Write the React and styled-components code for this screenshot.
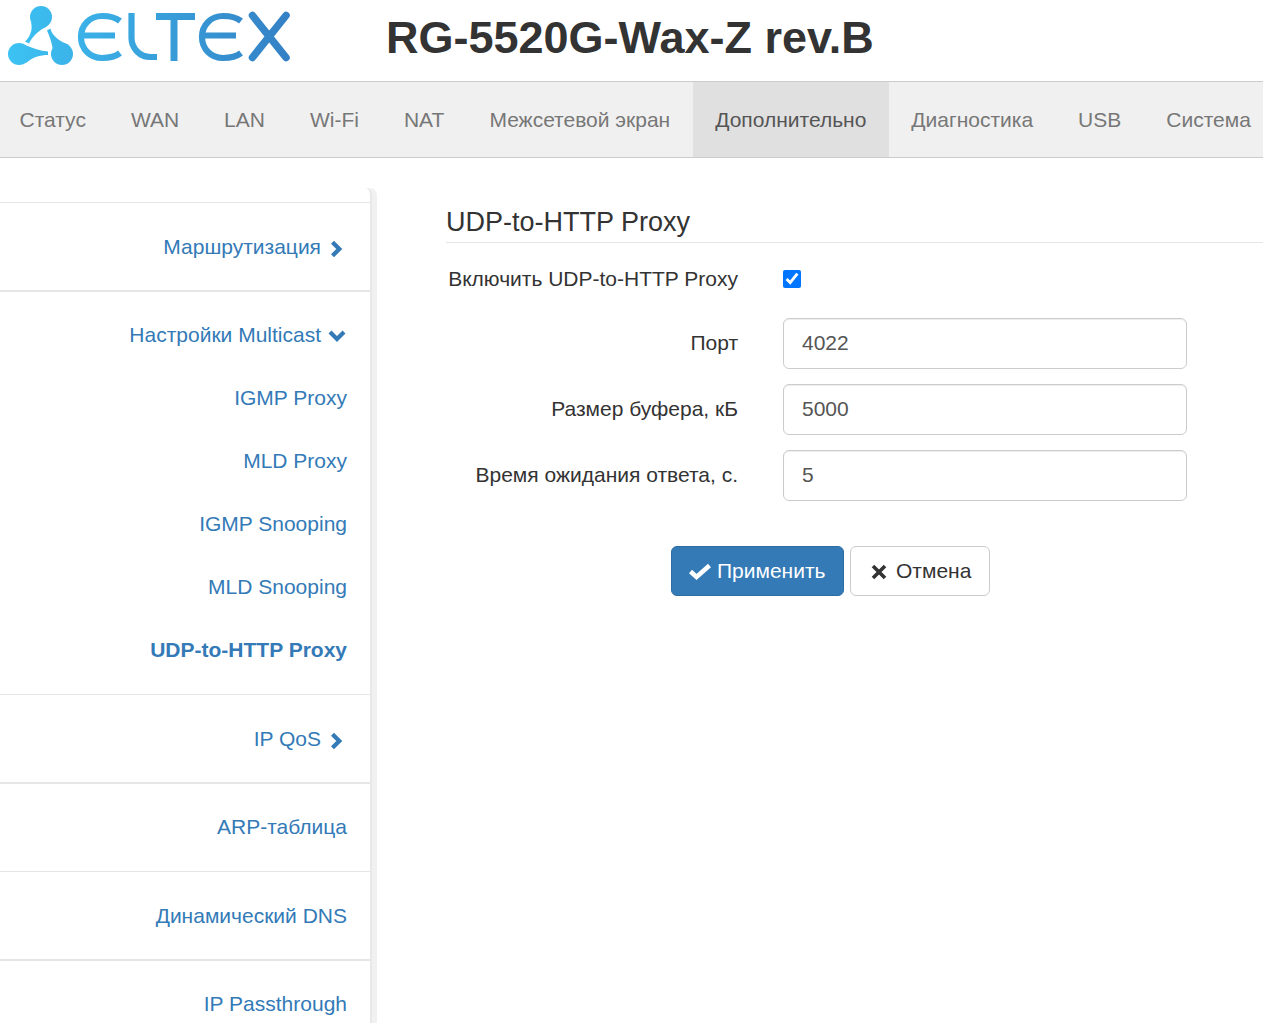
import React from "react";
import styled, { createGlobalStyle } from "styled-components";

const GlobalStyle = createGlobalStyle`
  html, body {
    margin: 0;
    padding: 0;
    height: 100%;
    overflow: hidden;
    background: #fff;
  }
  body {
    font-family: "Liberation Sans", Arial, sans-serif;
    font-size: 21px;
    line-height: 30px;
    color: #333;
  }
  * { box-sizing: border-box; }
`;

const NAV_ITEMS = ["Статус", "WAN", "LAN", "Wi-Fi", "NAT", "Межсетевой экран", "Дополнительно", "Диагностика", "USB", "Система"];

const FIELDS = [
  { label: "Порт", value: "4022" },
  { label: "Размер буфера, кБ", value: "5000" },
  { label: "Время ожидания ответа, с.", value: "5" },
];

const SUB_ITEMS = ["IGMP Proxy", "MLD Proxy", "IGMP Snooping", "MLD Snooping", "UDP-to-HTTP Proxy"];

function Logo() {
  return (
    <svg width="296" height="72" viewBox="0 0 296 72" fill="none">
      <defs>
        <linearGradient id="logoGrad" gradientUnits="userSpaceOnUse" x1="8" y1="0" x2="292" y2="0">
          <stop offset="0" stopColor="#3cc2f3" />
          <stop offset="1" stopColor="#3480c4" />
        </linearGradient>
      </defs>
      {/* three joined drops */}
      <g fill="url(#logoGrad)">
        <circle cx="41" cy="17" r="11" />
        <circle cx="19" cy="54" r="11" />
        <circle cx="62" cy="54" r="11" />
        <path d="M31 22 C33 30 30 37 25 41.500 L29 43.500 C32 37 38 31 46 27 Z" />
        <path d="M25 45 C33 48 40 51 48 51.500 V55 C40 55 33 57 26 63 Z" />
        <path d="M47 30.500 L50.500 28.500 C51 34 58 41 69 45 L55 62 C53 50 52 41 47 30.500 Z" />
      </g>
      <g stroke="url(#logoGrad)" strokeWidth="6.200" fill="none">
        <path d="M120 21 C115 17 108 16 102 16 C90 16 81 25 81 37 C81 49 90 58 102 58 C108 58 115 57 120 53" />
        <path d="M81 35.500 H115" />
        <path d="M131.500 13 V38 A 19 19 0 0 0 150.500 57 H157" />
        <path d="M156 16.500 H195" strokeWidth="7" />
        <path d="M174 16 V61" strokeWidth="7" />
        <path d="M241 21 C236 17 229 16 223 16 C211 16 202 25 202 37 C202 49 211 58 223 58 C229 58 236 57 241 53" />
        <path d="M202 35.500 H236" />
        <path d="M252.500 15.500 L286 57.500 M286 15.500 L252.500 57.500" strokeWidth="7.500" strokeLinecap="round" />
      </g>
    </svg>
  );
}

function ChevronRight() {
  return (
    <ChevronIcon viewBox="0 0 14 18">
      <path d="M3.500 2.200 L10.300 9 L3.500 15.800" fill="none" stroke="#337ab7" strokeWidth="4.200" />
    </ChevronIcon>
  );
}

function ChevronDown() {
  return (
    <ChevronDownIcon viewBox="0 0 18 14">
      <path d="M2 3 L9 10 L16 3" fill="none" stroke="#337ab7" strokeWidth="4.200" />
    </ChevronDownIcon>
  );
}

export default function App() {
  return (
    <Page>
      <GlobalStyle />
      <Header>
        <LogoBox>
          <Logo />
        </LogoBox>
        <DeviceTitle>RG-5520G-Wax-Z rev.B</DeviceTitle>
      </Header>
      <NavBar>
        {NAV_ITEMS.map((item) => (
          <NavItem key={item} $active={item === "Дополнительно"}>
            {item}
          </NavItem>
        ))}
      </NavBar>
      <Content>
        <Sidebar>
          <MenuGroup $height={88}>
            <MenuLink>
              Маршрутизация
              <ChevronRight />
            </MenuLink>
          </MenuGroup>
          <MenuGroup $height={404} $thick>
            <MenuLink>
              Настройки Multicast
              <ChevronDown />
            </MenuLink>
            {SUB_ITEMS.map((item) => (
              <SubLink key={item} $active={item === "UDP-to-HTTP Proxy"}>
                {item}
              </SubLink>
            ))}
          </MenuGroup>
          <MenuGroup $height={88}>
            <MenuLink>
              IP QoS
              <ChevronRight />
            </MenuLink>
          </MenuGroup>
          <MenuGroup $height={89} $thick>
            <PlainLink>ARP-таблица</PlainLink>
          </MenuGroup>
          <MenuGroup $height={88}>
            <PlainLink>Динамический DNS</PlainLink>
          </MenuGroup>
          <MenuGroup $height={88} $thick>
            <PlainLink>IP Passthrough</PlainLink>
          </MenuGroup>
        </Sidebar>
        <Main>
          <SectionTitle>UDP-to-HTTP Proxy</SectionTitle>
          <CheckRow>
            <FieldLabel>Включить UDP-to-HTTP Proxy</FieldLabel>
            <CheckBox type="checkbox" defaultChecked />
          </CheckRow>
          {FIELDS.map((field) => (
            <FieldRow key={field.label}>
              <RowLabel>{field.label}</RowLabel>
              <TextInput defaultValue={field.value} />
            </FieldRow>
          ))}
          <Actions>
            <PrimaryButton>
              <svg width="22" height="17" viewBox="0 0 22 17">
                <path d="M1.500 8.500 L7.500 14 L20.500 2.500" fill="none" stroke="#fff" strokeWidth="4.500" />
              </svg>
              Применить
            </PrimaryButton>
            <CancelButton>
              <CrossIcon viewBox="0 0 16 16">
                <path d="M2 2 L14 14 M14 2 L2 14" fill="none" stroke="#333" strokeWidth="3.600" />
              </CrossIcon>
              Отмена
            </CancelButton>
          </Actions>
        </Main>
      </Content>
    </Page>
  );
}

const Page = styled.div`
  width: 1263px;
  height: 1023px;
  overflow: hidden;
`;

const Header = styled.header`
  display: flex;
  align-items: center;
  height: 82px;
  border-bottom: 1px solid #ccc;
`;

const LogoBox = styled.div`
  display: flex;
  width: 386px;
  height: 72px;
  margin-bottom: 9px;
`;

const DeviceTitle = styled.h1`
  margin: 0 0 6px;
  font-size: 45px;
  line-height: 50px;
  font-weight: 700;
  white-space: nowrap;
`;

const NavBar = styled.nav`
  display: flex;
  height: 76px;
  margin-left: -3px;
  background: #f0f0f0;
  border-bottom: 1px solid #ccc;
  white-space: nowrap;
`;

const NavItem = styled.a`
  display: flex;
  align-items: center;
  flex-shrink: 0;
  padding: 0 22.500px;
  color: ${(p) => (p.$active ? "#555" : "#777")};
  background: ${(p) => (p.$active ? "#e0e0e0" : "transparent")};
`;

const Content = styled.div`
  display: flex;
  align-items: flex-start;
`;

const Sidebar = styled.aside`
  flex: none;
  width: 372px;
  height: 900px;
  margin: 30px 4px 0 0;
  padding-top: 14px;
  background: #fff;
  border-right: 2px solid #e8e8e8;
  border-top-right-radius: 7px;
  box-shadow: 5px 0 0 #f1f1f1;
`;

const MenuGroup = styled.div`
  display: flex;
  flex-direction: column;
  height: ${(p) => p.$height}px;
  padding-top: ${(p) => (p.$thick ? 28 : 29)}px;
  border-top: ${(p) => (p.$thick ? 2 : 1)}px solid #e6e6e6;
`;

const MenuLink = styled.a`
  display: flex;
  align-items: center;
  justify-content: flex-end;
  flex: none;
  height: 30px;
  padding-right: 23px;
  color: #337ab7;
`;

const PlainLink = styled(MenuLink)``;

const SubLink = styled(MenuLink)`
  margin-top: 33px;
  font-weight: ${(p) => (p.$active ? 700 : 400)};
`;

const ChevronIcon = styled.svg`
  width: 14px;
  height: 18px;
  margin: 3px 4px 0 8px;
`;

const ChevronDownIcon = styled.svg`
  width: 18px;
  height: 14px;
  margin: 2px 1px 0 7px;
`;

const Main = styled.main`
  flex: 1;
  padding: 45px 0 0 70px;
`;

const SectionTitle = styled.h2`
  height: 40px;
  margin: 0 0 21px;
  padding-top: 2px;
  font-size: 27px;
  line-height: 35px;
  font-weight: 400;
  border-bottom: 1px solid #e5e5e5;
`;

const FieldLabel = styled.label`
  width: 292px;
  margin-right: 45px;
  text-align: right;
`;

const RowLabel = styled(FieldLabel)`
  padding-bottom: 2px;
`;

const CheckRow = styled.div`
  display: flex;
  align-items: center;
  height: 30px;
  margin-bottom: 24px;
`;

const CheckBox = styled.input`
  width: 18px;
  height: 18px;
  margin: 0;
`;

const FieldRow = styled.div`
  display: flex;
  align-items: center;
  margin-bottom: 15px;
`;

const TextInput = styled.input`
  width: 404px;
  height: 51px;
  padding: 0 18px 2px;
  font: inherit;
  color: #555;
  background: #fff;
  border: 1px solid #ccc;
  border-radius: 6px;
  box-shadow: inset 0 1px 1px rgba(0, 0, 0, 0.075);
  outline: none;
`;

const Actions = styled.div`
  display: flex;
  gap: 6px;
  margin: 45px 0 0 225px;
`;

const PrimaryButton = styled.button`
  display: flex;
  align-items: center;
  gap: 6px;
  height: 50px;
  width: 173px;
  padding: 0 0 0 17px;
  font: inherit;
  color: #fff;
  background: #337ab7;
  border: 1px solid #2e6da4;
  border-radius: 6px;
`;

const CancelButton = styled(PrimaryButton)`
  gap: 9px;
  width: 140px;
  padding: 0 0 0 20px;
  color: #333;
  background: #fff;
  border-color: #ccc;
`;

const CrossIcon = styled.svg`
  width: 16px;
  height: 16px;
  margin-top: 2px;
`;
